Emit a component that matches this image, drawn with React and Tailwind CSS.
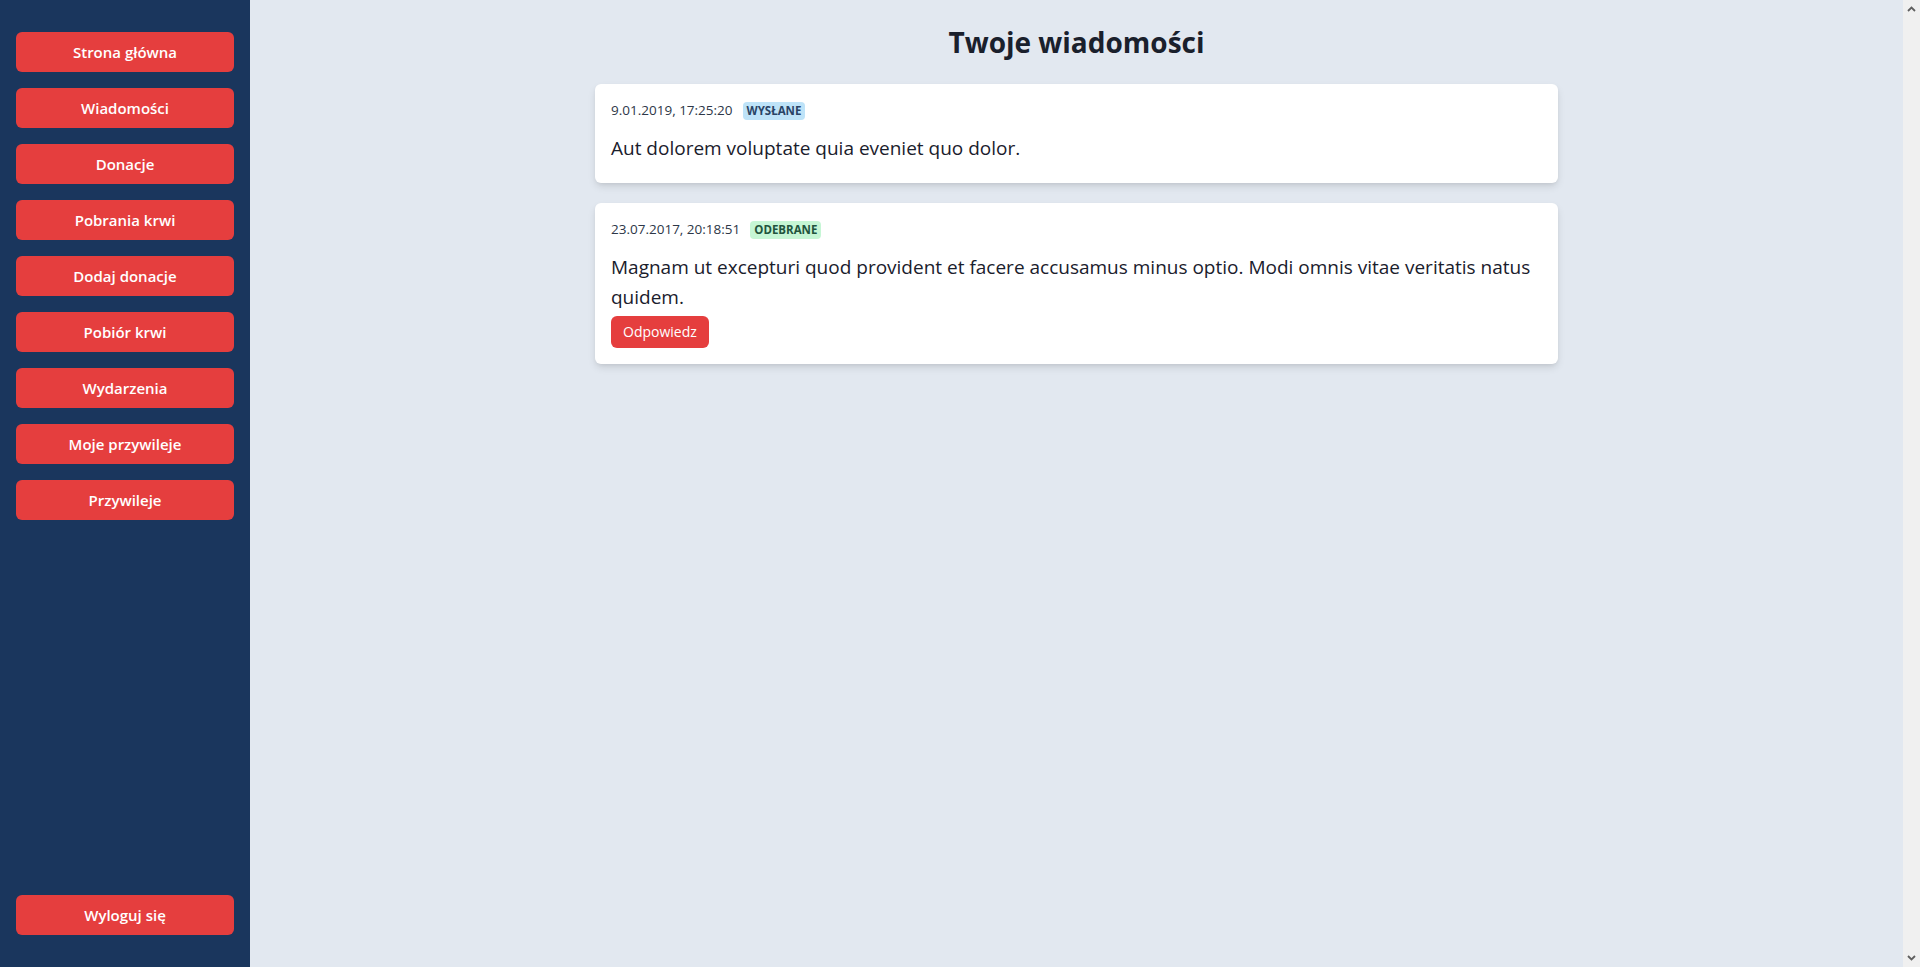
import { useState } from 'react';

const navItems = [
    'Strona główna',
    'Wiadomości',
    'Donacje',
    'Pobrania krwi',
    'Dodaj donacje',
    'Pobiór krwi',
    'Wydarzenia',
    'Moje przywileje',
    'Przywileje',
];

const messages = [
    {
        id: 1,
        date: '9.01.2019, 17:25:20',
        type: 'sent',
        content: 'Aut dolorem voluptate quia eveniet quo dolor.',
    },
    {
        id: 2,
        date: '23.07.2017, 20:18:51',
        type: 'received',
        content: 'Magnam ut excepturi quod provident et facere accusamus minus optio. Modi omnis vitae veritatis natus quidem.',
    },
];

function SideButton({ children }) {
    return (
        <button className="w-full rounded-md bg-[#e53e3e] py-2 text-center text-[15px] leading-6 font-semibold text-white">
            {children}
        </button>
    );
}

function MessageCard({ message }) {
    const sent = message.type === 'sent';

    return (
        <div className="rounded-md bg-white p-4 shadow-[0_4px_8px_-1px_rgba(0,0,0,0.12),0_2px_4px_-1px_rgba(0,0,0,0.06)]">
            <div className="flex items-center gap-2.5">
                <span className="text-[13.5px] leading-[21px] text-[#2d3748]">{message.date}</span>
                {sent ? (
                    <span className="rounded-sm bg-[#bee3f8] px-1 text-[11.5px] leading-[18px] font-bold text-[#2a4365]">WYSŁANE</span>
                ) : (
                    <span className="rounded-sm bg-[#c6f6d5] px-1 text-[11.5px] leading-[18px] font-bold text-[#22543d]">ODEBRANE</span>
                )}
            </div>
            <p className="mt-3 mb-1 text-[19px] leading-[30px] text-[#1a202c]">{message.content}</p>
            {!sent && (
                <button className="rounded-md bg-[#e53e3e] px-3 py-1.5 text-sm leading-5 text-white">Odpowiedz</button>
            )}
        </div>
    );
}

export default function App() {
    const [items] = useState(messages);

    return (
        <div className="flex h-screen overflow-hidden bg-[#e2e8f0] font-['Open_Sans',sans-serif]">
            <aside className="flex w-[250px] shrink-0 flex-col bg-[#1a365d] px-4 py-8">
                <nav className="flex flex-col gap-4">
                    {navItems.map((item) => (
                        <SideButton key={item}>{item}</SideButton>
                    ))}
                </nav>
                <div className="mt-auto">
                    <SideButton>Wyloguj się</SideButton>
                </div>
            </aside>

            <main className="flex-1 p-6">
                <h1 className="mb-6 text-center text-[28px] leading-9 font-bold text-[#1a202c]">Twoje wiadomości</h1>
                <div className="mx-auto flex w-3/5 flex-col gap-5">
                    {items.map((message) => (
                        <MessageCard key={message.id} message={message} />
                    ))}
                </div>
            </main>

            {/* fake scrollbar strip */}
            <div className="flex w-[17px] shrink-0 flex-col items-center justify-between bg-[#f0f0f0] py-1">
                <svg width="9" height="6" viewBox="0 0 9 6" className="mt-0.5">
                    <path d="M1 5 L4.5 1.5 L8 5" stroke="#5f5f5f" strokeWidth="1.8" fill="none" />
                </svg>
                <svg width="9" height="6" viewBox="0 0 9 6" className="mb-0.5">
                    <path d="M1 1 L4.5 4.5 L8 1" stroke="#5f5f5f" strokeWidth="1.8" fill="none" />
                </svg>
            </div>
        </div>
    );
}
